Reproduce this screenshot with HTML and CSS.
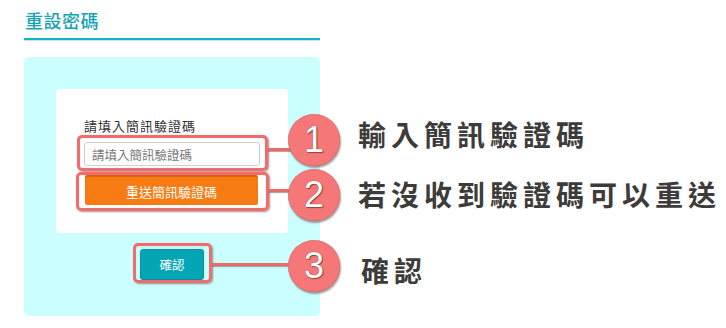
FILE: index.html
```html
<!DOCTYPE html>
<html lang="zh-Hant">
<head>
<meta charset="utf-8">
<title>重設密碼</title>
<link rel="stylesheet" href="styles.css">
</head>
<body>
<div class="page">
  <h1 class="title">重設密碼</h1>
  <div class="panel">
    <div class="card">
      <div class="label">請填入簡訊驗證碼</div>
      <input class="input" type="text" placeholder="請填入簡訊驗證碼">
      <button class="btn-resend" type="button">重送簡訊驗證碼</button>
    </div>
    <button class="btn-confirm" type="button">確認</button>
  </div>
</div>

<div class="hl hl-1"></div>
<div class="hl hl-2"></div>
<div class="hl hl-3"></div>
<div class="line line-1"></div>
<div class="line line-2"></div>
<div class="line line-3"></div>
<div class="num num-1">1</div>
<div class="num num-2">2</div>
<div class="num num-3">3</div>
<div class="note note-1">輸入簡訊驗證碼</div>
<div class="note note-2">若沒收到驗證碼可以重送</div>
<div class="note note-3">確認</div>
</body>
</html>
```
FILE: styles.css
```css
html, body {
  margin: 0;
  padding: 0;
  background: #ffffff;
  width: 726px;
  height: 328px;
  overflow: hidden;
}
body {
  font-family: "Noto Sans CJK TC", "Noto Sans", "Liberation Sans", sans-serif;
  color: #333333;
}
.page {
  width: 296px;
  padding: 8px 0 0 24px;
}
.title {
  margin: 0;
  padding: 0 0 6px 1px;
  font-size: 18px;
  line-height: 24px;
  font-weight: 500;
  letter-spacing: 0.5px;
  color: #17a3b4;
  border-bottom: 2px solid #14b3c3;
  box-shadow: 0 1px 0 #bfeaf0;
}
.panel {
  margin-top: 17px;
  height: 259px;
  box-sizing: border-box;
  padding: 32px 32px 0 32px;
  background: #ccffff;
  border-radius: 5px;
  display: flex;
  flex-direction: column;
  align-items: center;
}
.card {
  align-self: stretch;
  height: 144px;
  box-sizing: border-box;
  padding: 28px 28px 0 28px;
  background: #ffffff;
  border-radius: 4px;
  display: flex;
  flex-direction: column;
}
.label {
  font-size: 13px;
  line-height: 18px;
  letter-spacing: 1px;
  color: #2e2e2e;
}
.input {
  margin-top: 7px;
  width: 176px;
  height: 24px;
  box-sizing: border-box;
  border: 1px solid #cfcfcf;
  border-radius: 3px;
  padding: 0 7px;
  font-family: inherit;
  font-size: 12.5px;
  background: #ffffff;
}
.input::placeholder {
  color: #7a7a7a;
}
.btn-resend {
  margin: 9px 0 0 1px;
  width: 173px;
  height: 30px;
  border: none;
  border-top: 2px solid #d96707;
  border-radius: 2px;
  background: #f67b12;
  color: #ffffff;
  font-family: inherit;
  font-size: 13px;
  padding: 0;
}
.btn-confirm {
  margin-top: 16px;
  width: 64px;
  height: 31px;
  border: 1px solid #0a8f9c;
  border-radius: 3px;
  background: #04a6b5;
  color: #ffffff;
  font-family: inherit;
  font-size: 12.5px;
  padding: 0;
}

/* annotation overlay */
.hl {
  position: absolute;
  box-sizing: border-box;
  border: 3px solid #ef6d6d;
  border-radius: 5px;
  box-shadow: 1px 1px 2px rgba(90, 60, 60, 0.55), inset 0 0 1px rgba(120, 60, 60, 0.4);
}
.hl-1 { left: 77px; top: 135px; width: 191px; height: 36px; }
.hl-2 { left: 76px; top: 172px; width: 193px; height: 39px; }
.hl-3 { left: 133px; top: 243px; width: 79px; height: 40px; }
.line {
  position: absolute;
  height: 3px;
  background: #ea6b6b;
  box-shadow: 0 1px 1px rgba(90, 60, 60, 0.5);
}
.line-1 { left: 268px; top: 148px; width: 24px; }
.line-2 { left: 269px; top: 189px; width: 23px; }
.line-3 { left: 212px; top: 263px; width: 80px; }
.num {
  position: absolute;
  left: 288px;
  width: 52px;
  height: 52px;
  border-radius: 50%;
  background: #f67777;
  box-shadow: 1px 2px 2px rgba(80, 50, 50, 0.5), inset 0 0 1px rgba(150, 60, 60, 0.6);
  color: #ffffff;
  font-family: "Liberation Sans", Arial, sans-serif;
  font-size: 36px;
  line-height: 52px;
  text-align: center;
  text-shadow: 0 0 1px rgba(90, 40, 40, 0.9), 1px 1px 1px rgba(90, 40, 40, 0.6);
}
.num-1 { top: 114px; }
.num-2 { top: 169px; }
.num-3 { top: 240px; }
.note {
  position: absolute;
  left: 358px;
  font-size: 28px;
  line-height: 30px;
  font-weight: 700;
  letter-spacing: 5px;
  color: #3e3b3b;
  white-space: nowrap;
}
.note-1 { top: 119px; }
.note-2 { top: 179px; }
.note-3 { top: 255px; left: 361px; }
```
